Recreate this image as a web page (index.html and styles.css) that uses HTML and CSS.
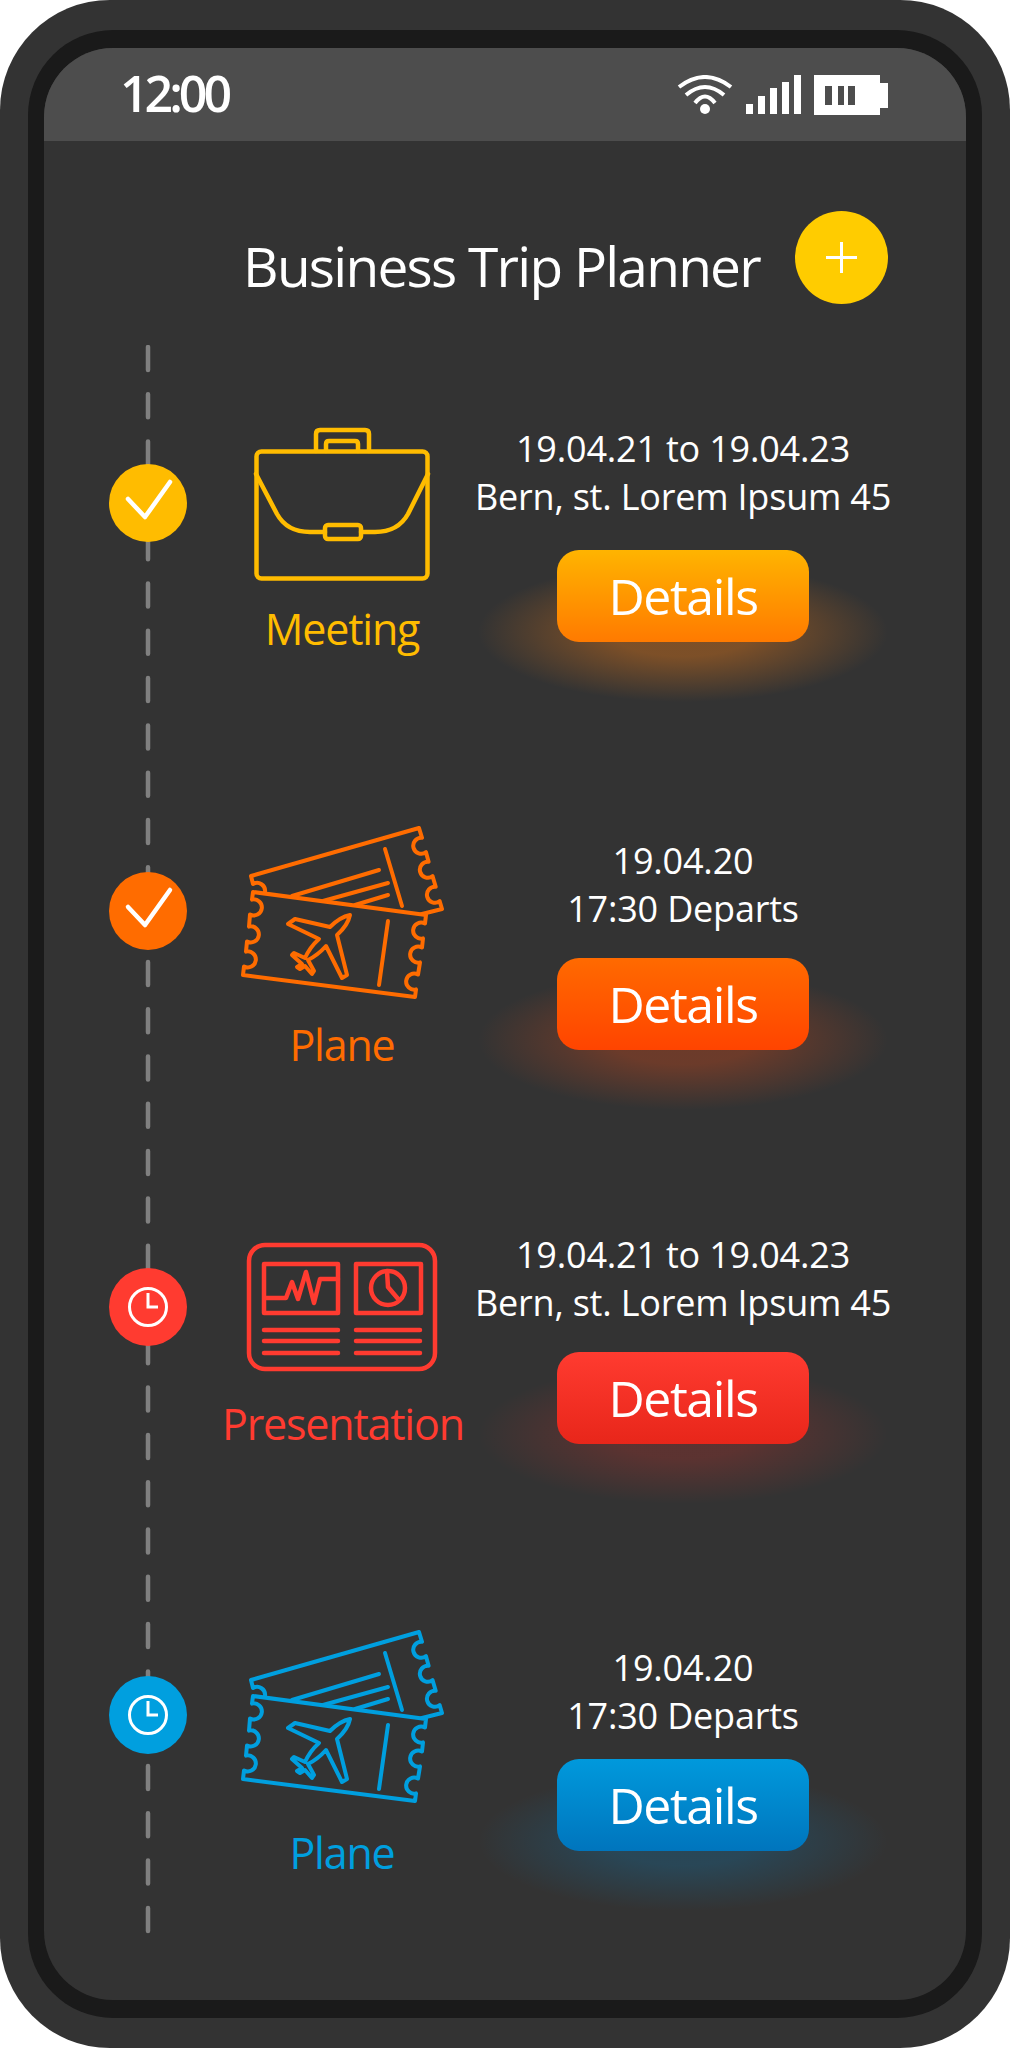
FILE: index.html
```html
<!DOCTYPE html>
<html lang="en">
<head>
  <meta charset="UTF-8">
  <meta name="viewport" content="width=device-width, initial-scale=1.0">
  <title>Business Trip Planner</title>
  <link rel="stylesheet" href="styles.css">
</head>
<body>

  <svg class="icon-defs" aria-hidden="true">
    <symbol id="icon-check" viewBox="0 0 78 78">
      <path d="M19 35L36 53L61 18" fill="none" stroke="#fff" stroke-width="4.5" stroke-linecap="round" stroke-linejoin="round"/>
    </symbol>
    <symbol id="icon-clock" viewBox="0 0 78 78">
      <circle cx="39" cy="39" r="18.5" fill="none" stroke="#fff" stroke-width="3"/>
      <path d="M39 25V39H49" fill="none" stroke="#fff" stroke-width="3"/>
    </symbol>
    <symbol id="icon-tickets" viewBox="2 14 240 176">
      <g fill="none" stroke="currentColor" stroke-width="4" stroke-linejoin="round" stroke-linecap="round">
        <path d="M45 80A8 8 0 0 0 33 72L31 64L199 16L202 25.800A8 8 0 1 0 206 40.200L208.600 49.800A8 8 0 1 0 212.600 64.200L215.700 74.800A8 8 0 1 0 219.700 89.200L222 97L202 102"/>
        <path d="M165 37L182 94M159 58L72 84M168 71L103 89M168 83L135 93"/>
        <path d="M33 80L206 103L205 111.600A8 8 0 1 0 203 126.400L202 135.600A8 8 0 1 0 200 150.400L198 162.600A8 8 0 1 0 196 177.400L195 185L23 163L24 154.400A8 8 0 1 0 26 139.600L27 129.400A8 8 0 1 0 29 114.600L30 102.400A8 8 0 1 0 32 87.600Z"/>
        <path d="M168 109L159 173"/>
        <path d="M130 103Q120 105 110 115L75 107L68 112L99 127Q90 135 85 146L74 141L72 143L82 152L77 155L80 157L85 154L92 162L94 159L88 148Q98 143 106 134L122 166L127 163L117 123Q128 113 130 103Z"/>
      </g>
    </symbol>
  </svg>

  <div class="phone">
    <div class="bezel">
      <div class="screen">

        <div class="status-bar">
          <span class="clock-time">12:00</span>
          <div class="status-icons">
            <svg class="wifi" width="56" height="40" viewBox="0 0 56 40">
              <g fill="none" stroke="#fff" stroke-width="4">
                <path d="M2 12Q28 -8 54 12"/>
                <path d="M9 20Q28 4 47 20"/>
                <path d="M18 28Q28 15 38 28"/>
              </g>
              <circle cx="28" cy="34" r="5" fill="#fff"/>
            </svg>
            <svg class="signal" width="55" height="40" viewBox="0 0 55 40">
              <g fill="#fff">
                <rect x="0" y="29" width="7" height="10"/>
                <rect x="12" y="21" width="7" height="18"/>
                <rect x="24" y="13" width="7" height="26"/>
                <rect x="36" y="7" width="7" height="32"/>
                <rect x="48" y="0" width="7" height="39"/>
              </g>
            </svg>
            <svg class="battery" width="74" height="40" viewBox="0 0 74 40">
              <rect x="0" y="0" width="66" height="40" fill="#fff"/>
              <rect x="66" y="8" width="8" height="25" fill="#fff"/>
              <g fill="#4d4d4d">
                <rect x="11" y="11" width="7" height="19"/>
                <rect x="24" y="11" width="6" height="19"/>
                <rect x="34" y="11" width="7" height="19"/>
              </g>
            </svg>
          </div>
        </div>

        <div class="title-row">
          <h1 class="title">Business Trip Planner</h1>
          <button class="add-btn" aria-label="Add trip"></button>
        </div>

        <svg class="timeline" width="8" height="1592" viewBox="0 0 8 1592">
          <line x1="4" y1="2" x2="4" y2="1590"/>
        </svg>

        <section class="trip trip-meeting">
          <div class="marker"><svg width="78" height="78"><use href="#icon-check"/></svg></div>
          <div class="trip-type">
            <div class="trip-art">
              <svg class="art-briefcase" width="184" height="168" viewBox="0 0 184 168">
                <g fill="none" stroke="currentColor" stroke-width="4.5" stroke-linejoin="round" stroke-linecap="round">
                  <rect x="6.500" y="30.500" width="171" height="127" rx="5"/>
                  <path d="M66 30V13Q66 9 70 9H115Q119 9 119 13V30"/>
                  <path d="M76 30V23Q76 20 79 20H105Q108 20 108 23V30"/>
                  <path d="M6 53L27 93Q37 111 60 111H75"/>
                  <rect x="75" y="104" width="36" height="14" rx="3"/>
                  <path d="M111 111H125Q148 111 158 93L178 53"/>
                </g>
              </svg>
            </div>
            <div class="trip-label">Meeting</div>
          </div>
          <div class="trip-info">
            <div class="trip-when">
              <p>19.04.21 to 19.04.23</p>
              <p>Bern, st. Lorem Ipsum 45</p>
            </div>
            <button class="details-btn">Details</button>
          </div>
        </section>

        <section class="trip trip-plane-done">
          <div class="marker"><svg width="78" height="78"><use href="#icon-check"/></svg></div>
          <div class="trip-type">
            <div class="trip-art">
              <svg width="240" height="176"><use href="#icon-tickets"/></svg>
            </div>
            <div class="trip-label">Plane</div>
          </div>
          <div class="trip-info">
            <div class="trip-when">
              <p>19.04.20</p>
              <p>17:30 Departs</p>
            </div>
            <button class="details-btn">Details</button>
          </div>
        </section>

        <section class="trip trip-presentation">
          <div class="marker"><svg width="78" height="78"><use href="#icon-clock"/></svg></div>
          <div class="trip-type">
            <div class="trip-art">
              <svg width="240" height="132" viewBox="2 22 240 132">
                <g fill="none" stroke="currentColor" stroke-width="4.500" stroke-linejoin="round" stroke-linecap="round">
                  <rect x="29" y="25" width="186" height="124" rx="16"/>
                  <rect x="44" y="44" width="74" height="49"/>
                  <rect x="136" y="44" width="65" height="49"/>
                  <path d="M45 78H66L72 62L78 79L86 52L94 83L100 59H118"/>
                  <circle cx="168" cy="68" r="17"/>
                  <path d="M167 51L168 67L179 80"/>
                  <path d="M44 110H118M44 121H118M44 133H118M136 110H200M136 121H200M136 133H200"/>
                </g>
              </svg>
            </div>
            <div class="trip-label">Presentation</div>
          </div>
          <div class="trip-info">
            <div class="trip-when">
              <p>19.04.21 to 19.04.23</p>
              <p>Bern, st. Lorem Ipsum 45</p>
            </div>
            <button class="details-btn">Details</button>
          </div>
        </section>

        <section class="trip trip-plane-next">
          <div class="marker"><svg width="78" height="78"><use href="#icon-clock"/></svg></div>
          <div class="trip-type">
            <div class="trip-art">
              <svg width="240" height="176"><use href="#icon-tickets"/></svg>
            </div>
            <div class="trip-label">Plane</div>
          </div>
          <div class="trip-info">
            <div class="trip-when">
              <p>19.04.20</p>
              <p>17:30 Departs</p>
            </div>
            <button class="details-btn">Details</button>
          </div>
        </section>

      </div>
    </div>
  </div>

</body>
</html>
```

FILE: styles.css
```css
/* General Reset */
* {
  box-sizing: border-box;
}

body, html {
  margin: 0;
  padding: 0;
  background: #fff;
  font-family: "Open Sans", "Liberation Sans", sans-serif;
}

.icon-defs {
  display: none;
}

/* Phone shell */
.phone {
  width: 1010px;
  height: 2048px;
  padding: 30px 28px;
  background: #333;
  border-radius: 110px;
}

.bezel {
  height: 100%;
  padding: 18px 16px;
  background: #1a1a1a;
  border-radius: 85px;
}

.screen {
  position: relative;
  isolation: isolate;
  height: 100%;
  background: #333;
  border-radius: 69px;
  overflow: hidden;
}

/* Status bar */
.status-bar {
  display: flex;
  justify-content: space-between;
  align-items: center;
  height: 93px;
  padding: 0 78px 0 76px;
  background: #4d4d4d;
  color: #fff;
}

.clock-time {
  margin-bottom: 3px;
  font-size: 50px;
  font-weight: 600;
  letter-spacing: -4px;
  line-height: 1;
}

.status-icons {
  display: flex;
  align-items: center;
  gap: 13px;
}

/* Title */
.title-row {
  display: flex;
  justify-content: flex-end;
  align-items: flex-start;
  gap: 35px;
  height: 277px;
  padding: 70px 78px 0 0;
}

.title {
  margin: 0;
  padding-top: 8px;
  color: #fff;
  font-size: 55px;
  font-weight: 400;
  letter-spacing: -1.75px;
  line-height: 93px;
  white-space: nowrap;
}

.add-btn {
  position: relative;
  width: 93px;
  height: 93px;
  padding: 0;
  border: none;
  border-radius: 50%;
  background: #fc0;
}

.add-btn::before,
.add-btn::after {
  content: "";
  position: absolute;
  background: #fff;
}

.add-btn::before {
  left: 31px;
  top: 45px;
  width: 31px;
  height: 3px;
}

.add-btn::after {
  left: 45px;
  top: 31px;
  width: 3px;
  height: 31px;
}

/* Dashed timeline */
.timeline {
  position: absolute;
  left: 100px;
  top: 297px;
}

.timeline line {
  stroke: #808080;
  stroke-width: 4.5;
  stroke-linecap: round;
  stroke-dasharray: 23 24.3;
}

/* Trip rows */
.trip {
  display: grid;
  grid-template-columns: 178px 240px 442px;
  height: var(--row-h);
  color: var(--accent);
}

.marker {
  position: relative;
  width: 78px;
  height: 78px;
  margin: var(--marker-top) 0 0 65px;
  border-radius: 50%;
  background: var(--accent);
}

.marker svg {
  display: block;
}

.trip-art {
  display: flex;
  justify-content: center;
  height: var(--art-h);
  padding-top: var(--art-top);
}

.trip-art svg {
  display: block;
  flex: none;
}

.trip-label {
  font-size: 43px;
  letter-spacing: -1.2px;
  line-height: 60px;
  text-align: center;
  white-space: nowrap;
}

.trip-info {
  display: flex;
  flex-direction: column;
  align-items: center;
}

.trip-when {
  height: 132px;
  padding-top: var(--text-top);
  color: #fff;
  font-size: 36px;
  line-height: 48px;
  letter-spacing: -0.2px;
  text-align: center;
  white-space: nowrap;
}

.trip-when p {
  margin: 0;
}

.details-btn {
  position: relative;
  width: 252px;
  height: 92px;
  padding: 0;
  border: none;
  border-radius: 22px;
  background: linear-gradient(var(--btn-top), var(--btn-bottom));
  color: #fff;
  font-family: inherit;
  font-size: 50px;
  letter-spacing: -1.4px;
}

.details-btn::before {
  content: "";
  position: absolute;
  z-index: -1;
  left: -79px;
  top: 12px;
  width: 410px;
  height: 140px;
  background: radial-gradient(ellipse closest-side, var(--glow) 35%, transparent);
}

/* Per-row colours and offsets */
.trip-meeting {
  --accent: #ffbc00;
  --btn-top: #ffb400;
  --btn-bottom: #ff7a00;
  --glow: rgba(255, 130, 20, 0.36);
  --row-h: 408px;
  --marker-top: 46px;
  --text-top: 7px;
  --art-top: 3px;
  --art-h: 181px;
}

.trip-plane-done {
  --accent: #ff6c00;
  --btn-top: #ff6a00;
  --btn-bottom: #ff4400;
  --glow: rgba(255, 80, 20, 0.28);
  --row-h: 394px;
  --marker-top: 46px;
  --text-top: 11px;
  --art-top: 0px;
  --art-h: 189px;
}

.trip-presentation {
  --accent: #ff3b30;
  --btn-top: #ff3b30;
  --btn-bottom: #e8261a;
  --glow: rgba(255, 50, 40, 0.2);
  --row-h: 407px;
  --marker-top: 48px;
  --text-top: 11px;
  --art-top: 22px;
  --art-h: 174px;
}

.trip-plane-next {
  --accent: #009fdf;
  --btn-top: #0099dc;
  --btn-bottom: #0075bd;
  --glow: rgba(0, 150, 230, 0.2);
  --row-h: 300px;
  --marker-top: 49px;
  --text-top: 17px;
  --art-top: 3px;
  --art-h: 196px;
}
```
